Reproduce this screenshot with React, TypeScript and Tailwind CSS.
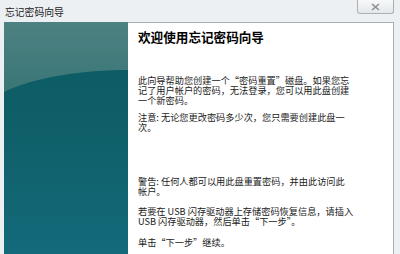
const font = { fontFamily: '"Noto Sans CJK SC", "Noto Sans", sans-serif' };

function CloseButton() {
  return (
    <div className="absolute right-[6px] top-0 flex h-[14px] w-[37px] items-center justify-center rounded-b-[3px] border border-t-0 border-[#a9b0b6] bg-gradient-to-b from-[#f7f8f9] to-[#e4e8eb]">
      <svg width="9" height="8" viewBox="0 0 9 8">
        <path d="M1 1 L8 7 M8 1 L1 7" stroke="#8a8f94" strokeWidth="1.6" />
      </svg>
    </div>
  );
}

function SidePanel() {
  return (
    <div className="relative w-[124px] shrink-0 overflow-hidden bg-gradient-to-b from-[#0a5a62] via-[#0f6069] to-[#146a7b]">
      <svg className="absolute left-0 top-0" width="124" height="80" viewBox="0 0 124 80">
        <defs>
          <linearGradient id="gl" x1="0" y1="0" x2="0" y2="1">
            <stop offset="0" stopColor="#4d8182" />
            <stop offset="1" stopColor="#3a7676" />
          </linearGradient>
        </defs>
        <path d="M0 0 H124 V48 C80 48 30 55 0 70 Z" fill="url(#gl)" />
      </svg>
    </div>
  );
}

const Line = ({ children }: { children: React.ReactNode }) => (
  <div className="h-[10px] whitespace-nowrap leading-[10px]">{children}</div>
);

export default function App() {
  return (
    <div
      className="flex h-[254px] w-[400px] flex-col overflow-hidden bg-[#edf0f2] text-[#1a1a1a]"
      style={font}
      lang="zh-CN"
    >
      <div className="relative h-[22px] shrink-0">
        <div className="pl-[5px] pt-[6px] text-[9.8px] leading-[12px] text-[#222]">忘记密码向导</div>
        <CloseButton />
      </div>

      <div className="flex flex-1 pl-[4px] pr-[6px]">
        <SidePanel />
        <div className="flex-1 border-r border-t border-[#a8adb2] bg-white pl-[10px] text-[9.2px]">
          <div className="mt-[6px] h-[16px] text-[12.6px] font-bold leading-[16px] text-black">
            欢迎使用忘记密码向导
          </div>

          <div className="mt-[30px]">
            <Line>此向导帮助您创建一个“密码重置”磁盘。如果您忘</Line>
            <Line>记了用户帐户的密码，无法登录，您可以用此盘创建</Line>
            <Line>一个新密码。</Line>
          </div>

          <div className="mt-[7px]">
            <Line>注意: 无论您更改密码多少次，您只需要创建此盘一</Line>
            <Line>次。</Line>
          </div>

          <div className="mt-[44px]">
            <Line>警告: 任何人都可以用此盘重置密码，并由此访问此</Line>
            <Line>帐户。</Line>
          </div>

          <div className="mt-[10px]">
            <Line>若要在 USB 闪存驱动器上存储密码恢复信息，请插入</Line>
            <Line>USB 闪存驱动器，然后单击“下一步”。</Line>
          </div>

          <div className="mt-[11px]">
            <Line>单击“下一步”继续。</Line>
          </div>
        </div>
      </div>
    </div>
  );
}
